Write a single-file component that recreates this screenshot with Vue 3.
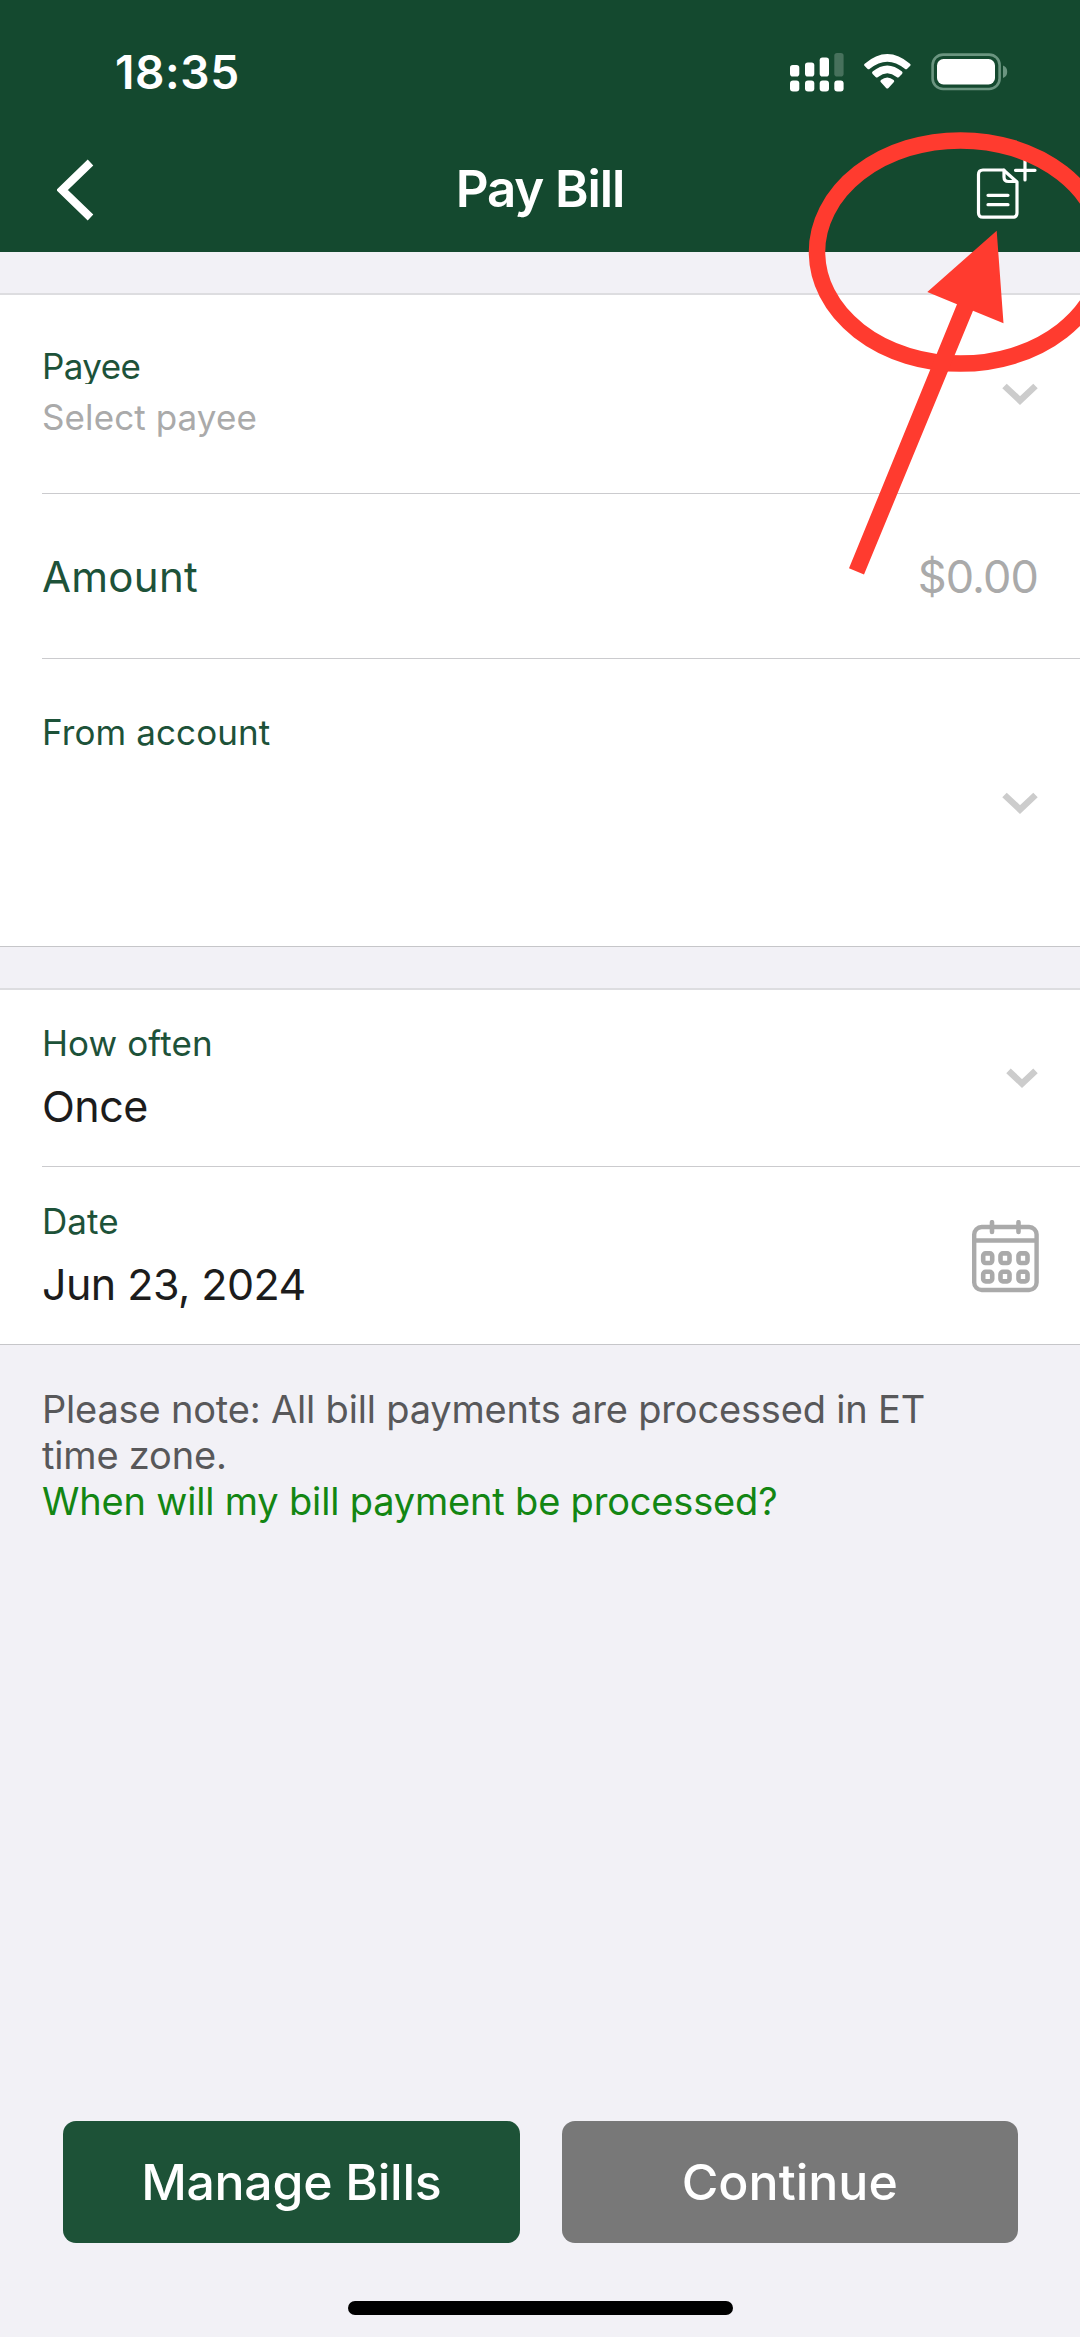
<script setup>
const dotColumns = [
  { x: 0, top: 12, on: true },
  { x: 15, top: 9.5, on: true },
  { x: 29.7, top: 4.5, on: true },
  { x: 44.3, top: 0, on: false },
]
const calendarCells = [
  [11.2, 33.4], [28.5, 33.4], [46.5, 33.4],
  [11.2, 51.8], [28.5, 51.8], [46.5, 51.8],
]
</script>

<template>
  <div class="screen">
    <header class="header">
      <div class="status">
        <span class="time">18:35</span>
        <svg class="status-icons" width="218" height="40" viewBox="0 0 218 40">
          <g fill="#fff">
            <template v-for="c in dotColumns" :key="c.x">
              <rect :x="c.x" :y="c.top" width="9.3" :height="23.5 - c.top" rx="2.8" :opacity="c.on ? 1 : 0.22" />
              <rect :x="c.x" y="27.5" width="9.3" height="11" rx="3" />
            </template>
          </g>
          <g fill="#fff">
            <path d="M74.7 10.7 Q97.3 -8.7 120 10.7 Q121.2 11.9 120 13.1 L117.2 15.8 Q116 16.8 114.8 15.8 Q97.3 1.6 79.8 15.8 Q78.6 16.8 77.4 15.8 L74.7 13.1 Q73.5 11.9 74.7 10.7Z" />
            <path d="M82.6 18.6 Q97.3 6.6 112 18.6 Q113.2 19.8 112 21 L109 23.9 Q107.8 25 106.6 23.9 Q97.3 16.6 88 23.9 Q86.8 25 85.6 23.9 L82.6 21 Q81.4 19.8 82.6 18.6Z" />
            <path d="M90.9 27 Q97.3 21.8 103.7 27 Q104.8 28.2 103.7 29.3 L98.5 34.9 Q97.3 36.2 96.1 34.9 L90.9 29.3 Q89.8 28.2 90.9 27Z" />
          </g>
          <rect x="142.6" y="1.6" width="67" height="34.4" rx="10.5" fill="none" stroke="#6b9580" stroke-width="2.6" />
          <rect x="147" y="6" width="58" height="25.4" rx="6.5" fill="#fff" />
          <path d="M213 12.5 Q217.2 14 217.2 18.8 Q217.2 23.6 213 25Z" fill="#6b9580" />
        </svg>
      </div>
      <nav class="nav">
        <svg class="back" width="37" height="62" viewBox="0 0 37 62">
          <path d="M33.5 3.5 L5 31 L33.5 58.5" fill="none" stroke="#fff" stroke-width="8" />
        </svg>
        <h1 class="title">Pay Bill</h1>
        <svg class="add" width="62" height="60" viewBox="0 0 62 60">
          <g fill="none" stroke="#fff" stroke-width="3.2" stroke-linecap="round" stroke-linejoin="round">
            <path d="M28.5 11 H8 Q3.5 11 3.5 15.5 V53.7 Q3.5 58.2 8 58.2 H37.5 Q42 58.2 42 53.7 V23 Z" />
            <path d="M29 11 V18 Q29 22.5 33.5 22.5 H41" />
            <path d="M13 36.3 H33 M13 45.7 H33" />
            <path d="M40.5 11.3 H60 M50 1 V21" />
          </g>
        </svg>
      </nav>
    </header>

    <section class="card">
      <div class="row payee">
        <div>
          <div class="label clipped">Payee</div>
          <div class="placeholder">Select payee</div>
        </div>
        <svg class="chevron" width="36" height="22" viewBox="0 0 36 22"><path d="M2.5 3 L18 17.5 L33.5 3" /></svg>
      </div>
      <div class="row amount">
        <span class="amount-label">Amount</span>
        <span class="amount-value">$0.00</span>
      </div>
      <div class="row from">
        <div class="label">From account</div>
        <svg class="chevron" width="36" height="22" viewBox="0 0 36 22"><path d="M2.5 3 L18 17.5 L33.5 3" /></svg>
      </div>
    </section>

    <section class="card">
      <div class="row often">
        <div>
          <div class="label">How often</div>
          <div class="value">Once</div>
        </div>
        <svg class="chevron" width="32" height="20" viewBox="0 0 32 20"><path d="M2.5 2.8 L16 15.5 L29.5 2.8" /></svg>
      </div>
      <div class="row date">
        <div>
          <div class="label">Date</div>
          <div class="value">Jun 23, 2024</div>
        </div>
        <svg class="calendar" width="67" height="73" viewBox="0 0 67 73">
          <g fill="none" stroke="#aaa">
            <rect x="2.2" y="7" width="62.4" height="63" rx="7.5" stroke-width="4.4" />
            <path d="M3 20.5 H64" stroke-width="4.4" />
            <path d="M20 2.2 V12 M46.5 2.2 V12" stroke-width="4.6" stroke-linecap="round" />
            <rect v-for="([x, y], i) in calendarCells" :key="i" :x="x" :y="y" width="9" height="9.6" rx="2.4" stroke-width="4.6" />
          </g>
        </svg>
      </div>
    </section>

    <div class="note">
      <p class="note-text">Please note: All bill payments are processed in ET<br />time zone.</p>
      <a class="note-link">When will my bill payment be processed?</a>
    </div>

    <footer class="footer">
      <div class="buttons">
        <button class="btn manage">Manage Bills</button>
        <button class="btn continue">Continue</button>
      </div>
      <div class="home"></div>
    </footer>

    <svg class="annotation" width="1080" height="600" viewBox="0 0 1080 600">
      <ellipse cx="960.5" cy="252" rx="143.5" ry="111.6" fill="none" stroke="#ff3b2f" stroke-width="16.5" />
      <path d="M996.7 230.7 L1003.5 323.3 L973 310.7 L864 574.5 L849 568.3 L957 304.3 L927.3 292Z" fill="#ff3b2f" />
    </svg>
  </div>
</template>

<style>
body { margin: 0; background: #f2f1f6; }
</style>

<style scoped>
.screen {
  position: relative;
  display: flex;
  flex-direction: column;
  width: 1080px;
  height: 2337px;
  overflow: hidden;
  background: #f2f1f6;
  font-family: Inter, "Liberation Sans", sans-serif;
  box-sizing: border-box;
}
.screen * { box-sizing: border-box; }
svg { display: block; flex: none; }
.header { height: 252px; background: #14492f; color: #fff; flex: none; }
.status {
  height: 144px;
  display: flex;
  align-items: center;
  justify-content: space-between;
  padding: 0 72px 0 115px;
}
.status-icons { margin-top: 1px; }
.time { font-size: 46px; font-weight: 600; letter-spacing: 0.6px; }
.nav {
  height: 90px;
  display: grid;
  grid-template-columns: 200px 1fr 200px;
  align-items: center;
}
.back { margin: 2px 0 0 57px; }
.title {
  margin: 0;
  text-align: center;
  font-size: 51px;
  line-height: 90px;
  font-weight: 600;
  letter-spacing: -1.1px;
}
.add { margin: 0 43px 0 auto; }
.card {
  flex: none;
  margin-top: 41px;
  background: #fff;
  border-top: 2px solid #dddde0;
  border-bottom: 1px solid #c6c6c9;
  padding-left: 42px;
}
.row {
  display: flex;
  align-items: center;
  justify-content: space-between;
  padding-right: 42px;
  border-bottom: 1px solid #cbcbce;
}
.row:last-child { border-bottom: none; }
.row > div { align-self: flex-start; }
.payee { height: 199px; }
.payee > div { padding-top: 46px; }
.amount { height: 165px; }
.from { height: 287px; }
.from > div { padding-top: 48px; }
.often { height: 177px; }
.often > div { padding-top: 28px; }
.date { height: 177px; }
.date > div { padding-top: 29px; }
.label, .placeholder { font-size: 35px; line-height: 51px; letter-spacing: 0.1px; white-space: nowrap; }
.label { color: #1d5239; }
.clipped { height: 43px; overflow: hidden; margin-bottom: 8px; letter-spacing: -0.6px; }
.placeholder { color: #aaa; }
.amount-label { font-size: 42px; color: #1d5239; letter-spacing: 0.3px; }
.amount-value { font-size: 45px; color: #aaa; font-weight: 400; letter-spacing: -0.9px; padding-top: 1px; }
.value { font-size: 43px; line-height: 75px; letter-spacing: -0.55px; color: #1c1c1c; white-space: nowrap; }
.chevron path { fill: none; stroke: #ccc; stroke-width: 6.5; }
.calendar { margin: 1px -1px 0 0; }
.note { padding: 41px 42px 0; font-size: 38px; line-height: 46px; letter-spacing: -0.18px; white-space: nowrap; }
.note-text { margin: 0; color: #58585a; }
.note-link { color: #138613; }
.footer { margin-top: auto; padding: 0 62px 22px 63px; }
.buttons { display: flex; gap: 42px; }
.btn {
  flex: 1;
  height: 122px;
  border: 0;
  border-radius: 13px;
  padding: 0;
  color: #fff;
  font: 500 50px/121px Inter, "Liberation Sans", sans-serif;
}
.manage { background: #1d5237; letter-spacing: -0.3px; }
.continue { background: #787878; }
.home { width: 385px; height: 14px; margin: 58px auto 0; border-radius: 7px; background: #000; }
.annotation { position: absolute; left: 0; top: 0; pointer-events: none; }
</style>
